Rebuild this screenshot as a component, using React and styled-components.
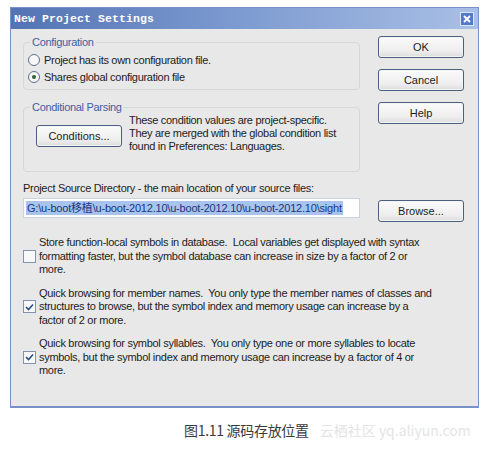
import React from 'react';
import styled, { createGlobalStyle } from 'styled-components';

const GlobalStyle = createGlobalStyle`
  html, body {
    margin: 0;
    padding: 0;
    background: #ffffff;
  }
  body {
    font-family: "Liberation Sans", Arial, sans-serif;
  }
`;

const Page = styled.div`
  width: 489px;
  height: 449px;
  padding: 7px 0 0 10px;
  box-sizing: border-box;
  overflow: hidden;
`;

const Dialog = styled.div`
  width: 469px;
  height: 401px;
  box-sizing: border-box;
  border: 1px solid #7891c6;
  border-bottom-width: 2px;
  background: #e8e8e8;
  display: flex;
  flex-direction: column;
`;

const TitleBar = styled.div`
  height: 21px;
  flex: none;
  display: flex;
  align-items: center;
  justify-content: space-between;
  padding: 0 4px 0 3px;
  background: linear-gradient(to right, #5373b3 0%, #7a98cf 45%, #a9c0e6 100%);
`;

const Title = styled.span`
  font-family: "Liberation Mono", "DejaVu Sans Mono", monospace;
  font-weight: bold;
  font-size: 11.5px;
  color: #ffffff;
  letter-spacing: 0.1px;
`;

const CloseButton = styled.div`
  width: 14px;
  height: 14px;
  box-sizing: border-box;
  border: 1px solid #dbe5f5;
  background: #4f7bc8;
  display: flex;
  align-items: center;
  justify-content: center;
`;

const Body = styled.div`
  flex: 1;
  padding: 7px 14px 0 12px;
  display: flex;
  flex-direction: column;
  font-size: 11px;
  letter-spacing: -0.3px;
  color: #1c1c1c;
`;

const TopRow = styled.div`
  display: flex;
  justify-content: space-between;
`;

const LeftCol = styled.div`
  width: 337px;
  display: flex;
  flex-direction: column;
  gap: 11px;
`;

const RightCol = styled.div`
  width: 86px;
  display: flex;
  flex-direction: column;
  gap: 11px;
`;

const Group = styled.fieldset`
  margin: 0;
  border: 1px solid #d7d7d7;
  border-radius: 4px;
  height: ${p => p.$h}px;
  box-sizing: border-box;
  padding: 0 4px;
`;

const Legend = styled.legend`
  font-size: 11px;
  color: #3d5fa6;
  padding: 0 2px;
  margin-left: 2px;
  line-height: 12px;
`;

const Button = styled.div`
  width: 86px;
  height: 22px;
  flex: none;
  box-sizing: border-box;
  border: 1px solid #4d5f7e;
  border-radius: 3px;
  background: linear-gradient(#fbfbfb, #eeeeee 70%, #dcdcdc);
  box-shadow: inset 0 0 0 1px #f4f4f4;
  display: flex;
  align-items: center;
  justify-content: center;
  font-size: 11px;
  letter-spacing: 0;
  color: #1c1c1c;
  margin-top: ${p => p.$top || 0}px;
`;

const Radios = styled.div`
  display: flex;
  flex-direction: column;
  margin-top: 4px;
  gap: 1px;
`;

const RadioRow = styled.div`
  display: flex;
  align-items: center;
  gap: 4px;
  height: 16px;
`;

const RadioCircle = styled.span`
  width: 12px;
  height: 12px;
  box-sizing: border-box;
  border-radius: 50%;
  border: 1px solid #5d6f8f;
  background: #f7f7f7;
  display: flex;
  align-items: center;
  justify-content: center;
  &::after {
    content: "";
    width: 4px;
    height: 4px;
    border-radius: 50%;
    background: ${p => (p.$on ? '#2f5f35' : 'transparent')};
  }
`;

const CondRow = styled.div`
  display: flex;
  align-items: flex-start;
  gap: 7px;
  padding-left: 8px;
`;

const Note = styled.div`
  line-height: 13px;
  margin-top: 1px;
`;

const Label = styled.div`
  margin-top: 10px;
  line-height: 13px;
`;

const PathRow = styled.div`
  display: flex;
  justify-content: space-between;
  align-items: flex-start;
  margin-top: 3px;
`;

const PathInput = styled.div`
  width: 337px;
  height: 20px;
  box-sizing: border-box;
  border: 1px solid #c9d3e2;
  background: #ffffff;
  padding: 2px;
  display: flex;
  align-items: center;
`;

const Selected = styled.span`
  background: #a9c4ec;
  color: #19357d;
  font-family: "Liberation Sans", "Noto Sans CJK SC", sans-serif;
  line-height: 14px;
  padding: 0 1px;
  white-space: nowrap;
  letter-spacing: -0.2px;
`;

const Options = styled.div`
  display: flex;
  flex-direction: column;
  gap: 10px;
  margin-top: 14px;
`;

const Option = styled.div`
  display: flex;
  align-items: center;
  gap: 3px;
`;

const CheckBox = styled.span`
  width: 13px;
  height: 13px;
  flex: none;
  box-sizing: border-box;
  border: 1px solid #8292b0;
  background: #f8f8f8;
  display: flex;
  align-items: center;
  justify-content: center;
`;

const OptionText = styled.div`
  line-height: 13.5px;
  white-space: pre;
`;

const CaptionRow = styled.div`
  display: flex;
  align-items: baseline;
  white-space: nowrap;
  padding: 12px 0 0 174px;
  font-family: "Noto Sans CJK SC", sans-serif;
  font-size: 14px;
`;

const Caption = styled.span`
  color: #3a3a3a;
  letter-spacing: -0.3px;
`;

const Watermark = styled.span`
  color: #e4e4e4;
  margin-left: 11px;
  font-size: 14px;
`;

function Check() {
  return (
    <svg width="9" height="8" viewBox="0 0 9 8">
      <path d="M1 4 L3.5 6.5 L8 1.5" fill="none" stroke="#2b4c8c" strokeWidth="1.6" />
    </svg>
  );
}

function OptionItem({ checked, lines }) {
  return (
    <Option>
      <CheckBox>{checked && <Check />}</CheckBox>
      <OptionText>
        {lines.map((l, i) => (
          <div key={i}>{l}</div>
        ))}
      </OptionText>
    </Option>
  );
}

export default function App() {
  return (
    <Page>
      <GlobalStyle />
      <Dialog>
        <TitleBar>
          <Title>New Project Settings</Title>
          <CloseButton>
            <svg width="8" height="8" viewBox="0 0 8 8">
              <path d="M1 1 L7 7 M7 1 L1 7" stroke="#ffffff" strokeWidth="2" />
            </svg>
          </CloseButton>
        </TitleBar>
        <Body>
          <TopRow>
            <LeftCol>
              <Group $h={54}>
                <Legend>Configuration</Legend>
                <Radios>
                  <RadioRow>
                    <RadioCircle />
                    Project has its own configuration file.
                  </RadioRow>
                  <RadioRow>
                    <RadioCircle $on />
                    Shares global configuration file
                  </RadioRow>
                </Radios>
              </Group>
              <Group $h={71}>
                <Legend>Conditional Parsing</Legend>
                <CondRow>
                  <Button $top={12}>Conditions...</Button>
                  <Note>
                    <div>These condition values are project-specific.</div>
                    <div>They are merged with the global condition list</div>
                    <div>found in Preferences: Languages.</div>
                  </Note>
                </CondRow>
              </Group>
            </LeftCol>
            <RightCol>
              <Button>OK</Button>
              <Button>Cancel</Button>
              <Button>Help</Button>
            </RightCol>
          </TopRow>
          <Label>Project Source Directory - the main location of your source files:</Label>
          <PathRow>
            <PathInput>
              <Selected>G:\u-boot移植\u-boot-2012.10\u-boot-2012.10\u-boot-2012.10\sight</Selected>
            </PathInput>
            <Button $top={2}>Browse...</Button>
          </PathRow>
          <Options>
            <OptionItem
              lines={[
                'Store function-local symbols in database.  Local variables get displayed with syntax',
                'formatting faster, but the symbol database can increase in size by a factor of 2 or',
                'more.',
              ]}
            />
            <OptionItem
              checked
              lines={[
                'Quick browsing for member names.  You only type the member names of classes and',
                'structures to browse, but the symbol index and memory usage can increase by a',
                'factor of 2 or more.',
              ]}
            />
            <OptionItem
              checked
              lines={[
                'Quick browsing for symbol syllables.  You only type one or more syllables to locate',
                'symbols, but the symbol index and memory usage can increase by a factor of 4 or',
                'more.',
              ]}
            />
          </Options>
        </Body>
      </Dialog>
      <CaptionRow>
        <Caption>图1.11 源码存放位置</Caption>
        <Watermark>云栖社区 yq.aliyun.com</Watermark>
      </CaptionRow>
    </Page>
  );
}
